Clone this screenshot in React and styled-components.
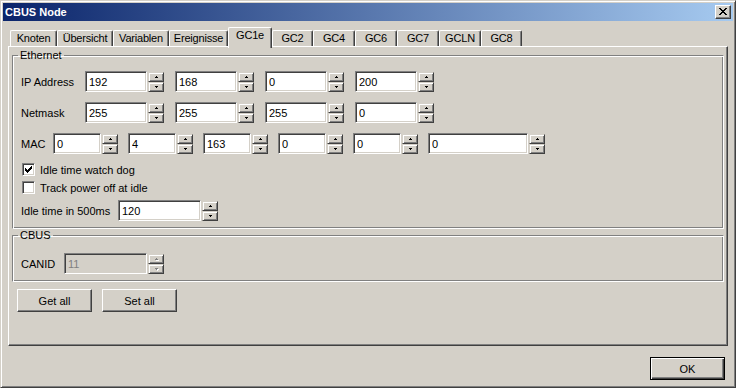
import React from "react";
import styled, { createGlobalStyle } from "styled-components";

const TABS = [
  { label: "Knoten", w: 47 },
  { label: "Übersicht", w: 56 },
  { label: "Variablen", w: 56 },
  { label: "Ereignisse", w: 59 },
  { label: "GC1e", w: 44, active: true },
  { label: "GC2", w: 41 },
  { label: "GC4", w: 42 },
  { label: "GC6", w: 42 },
  { label: "GC7", w: 42 },
  { label: "GCLN", w: 42 },
  { label: "GC8", w: 41 },
];

const UP = "M1 0h1v1h-1z M0 1h3v1h-3z";
const DOWN = "M0 0h3v1h-3z M1 1h1v1h-1z";

const Arrow = ({ down, disabled }) => (
  <svg width="3" height="2" viewBox="0 0 3 2" shapeRendering="crispEdges" style={{ display: "block", overflow: "visible" }}>
    {disabled && <path transform="translate(1 1)" fill="#fff" d={down ? DOWN : UP} />}
    <path fill={disabled ? "#808080" : "#000"} d={down ? DOWN : UP} />
  </svg>
);

const Spin = ({ disabled }) => (
  <SpinCol>
    <SpinBtn>
      <Arrow disabled={disabled} />
    </SpinBtn>
    <SpinBtn>
      <Arrow down disabled={disabled} />
    </SpinBtn>
  </SpinCol>
);

const Field = ({ value, w, mr, disabled }) => (
  <FieldWrap $mr={mr}>
    <Edit $w={w} value={value} readOnly disabled={disabled} />
    <Spin disabled={disabled} />
  </FieldWrap>
);

const Check = ({ checked, label, mt }) => (
  <CheckRow $mt={mt}>
    <CheckBox>
      {checked && (
        <svg width="7" height="7" viewBox="0 0 7 7" shapeRendering="crispEdges">
          <path d="M6 0h1v1h-1z M5 1h2v1h-2z M0 2h1v1h-1z M4 2h3v1h-3z M0 3h2v1h-2z M3 3h3v1h-3z M0 4h5v1h-5z M1 5h3v1h-3z M2 6h1v1h-1z" />
        </svg>
      )}
    </CheckBox>
    {label}
  </CheckRow>
);

const App = () => {
  return (
    <>
      <GlobalStyle />
      <Window>
        <TitleBar>
          <Title>CBUS Node</Title>
          <CloseBtn>
            <svg width="8" height="7" viewBox="0 0 8 7" shapeRendering="crispEdges">
              <path d="M0 0h2v1h-2z M6 0h2v1h-2z M1 1h2v1h-2z M5 1h2v1h-2z M2 2h4v1h-4z M3 3h2v1h-2z M2 4h4v1h-4z M1 5h2v1h-2z M5 5h2v1h-2z M0 6h2v1h-2z M6 6h2v1h-2z" />
            </svg>
          </CloseBtn>
        </TitleBar>

        <Body>
          <TabStrip>
            {TABS.map((t) => (
              <Tab key={t.label} $w={t.w} $active={t.active}>
                {t.label}
              </Tab>
            ))}
          </TabStrip>

          <Panel>
            <GroupBox>
              <Legend>Ethernet</Legend>
              <Row $mt={9}>
                <Label $w={64}>IP Address</Label>
                <Field value="192" w={62} mr={11} />
                <Field value="168" w={62} mr={11} />
                <Field value="0" w={62} mr={11} />
                <Field value="200" w={62} />
              </Row>
              <Row $mt={10}>
                <Label $w={64}>Netmask</Label>
                <Field value="255" w={62} mr={11} />
                <Field value="255" w={62} mr={11} />
                <Field value="255" w={62} mr={11} />
                <Field value="0" w={62} />
              </Row>
              <Row $mt={10}>
                <Label $w={32}>MAC</Label>
                <Field value="0" w={48} mr={10} />
                <Field value="4" w={48} mr={10} />
                <Field value="163" w={48} mr={10} />
                <Field value="0" w={48} mr={10} />
                <Field value="0" w={48} mr={10} />
                <Field value="0" w={100} />
              </Row>
              <Check checked label="Idle time watch dog" mt={9} />
              <Check label="Track power off at idle" mt={5} />
              <Row $mt={6}>
                <Label $w={97}>Idle time in 500ms</Label>
                <Field value="120" w={83} />
              </Row>
            </GroupBox>

            <GroupBox>
              <Legend>CBUS</Legend>
              <Row $mt={11}>
                <Label $w={43}>CANID</Label>
                <Field value="11" w={83} disabled />
              </Row>
            </GroupBox>

            <ButtonRow>
              <Button>Get all</Button>
              <Button>Set all</Button>
            </ButtonRow>
          </Panel>

          <Footer>
            <Button $default>OK</Button>
          </Footer>
        </Body>
      </Window>
    </>
  );
};

export default App;

const GlobalStyle = createGlobalStyle`
  html, body {
    margin: 0;
    padding: 0;
    background: #d4d0c8;
  }
`;

const Window = styled.div`
  width: 736px;
  height: 388px;
  box-sizing: border-box;
  padding: 2px;
  background: #d4d0c8;
  border: 1px solid;
  border-color: #d4d0c8 #404040 #404040 #d4d0c8;
  box-shadow: inset 1px 1px #fff, inset -1px -1px #808080;
  display: flex;
  flex-direction: column;
  font-family: "Liberation Sans", Arial, sans-serif;
  font-size: 11px;
  color: #000;
`;

const TitleBar = styled.div`
  height: 18px;
  flex: none;
  display: flex;
  align-items: center;
  justify-content: space-between;
  padding: 0 2px;
  background: linear-gradient(to right, #0a246a, #a6caf0);
`;

const Title = styled.span`
  color: #fff;
  font-weight: bold;
  font-size: 11px;
  line-height: 13px;
`;

const CloseBtn = styled.div`
  width: 16px;
  height: 14px;
  box-sizing: border-box;
  background: #d4d0c8;
  border: 1px solid;
  border-color: #fff #404040 #404040 #fff;
  box-shadow: inset -1px -1px #808080;
  display: flex;
  align-items: center;
  justify-content: center;
  padding: 0 1px 1px 0;
  svg {
    display: block;
  }
`;

const Body = styled.div`
  flex: 1;
  display: flex;
  flex-direction: column;
  padding: 6px 5px 0;
`;

const TabStrip = styled.div`
  display: flex;
  align-items: flex-end;
  height: 19px;
  padding-left: 2px;
  position: relative;
  z-index: 1;
`;

const Tab = styled.div`
  width: ${(p) => p.$w}px;
  height: ${(p) => (p.$active ? 21 : 16)}px;
  margin-bottom: ${(p) => (p.$active ? -2 : 0)}px;
  box-sizing: border-box;
  background: #d4d0c8;
  border-top: 1px solid #fff;
  border-left: 1px solid #fff;
  border-right: 1px solid #404040;
  border-radius: 2px 2px 0 0;
  box-shadow: inset -1px 0 #808080;
  text-align: center;
  line-height: 15px;
  letter-spacing: -0.2px;
  white-space: nowrap;
`;

const Panel = styled.div`
  width: 720px;
  height: 300px;
  box-sizing: border-box;
  border: 1px solid;
  border-color: #fff #404040 #404040 #fff;
  box-shadow: inset -1px -1px #808080;
  padding: 2px 3px 0;
  display: flex;
  flex-direction: column;
`;

const GroupBox = styled.fieldset`
  margin: 0;
  min-width: 0;
  padding: 0 8px 7px;
  border: 1px solid;
  border-color: #808080 #fff #fff #808080;
  box-shadow: inset 1px 1px #fff, inset -1px -1px #808080;
  display: flex;
  flex-direction: column;
`;

const Legend = styled.legend`
  padding: 0 2px;
  margin-left: -3px;
  line-height: 13px;
  font-size: 11px;
`;

const Row = styled.div`
  display: flex;
  align-items: center;
  height: 21px;
  margin-top: ${(p) => p.$mt || 0}px;
`;

const Label = styled.span`
  width: ${(p) => p.$w}px;
  flex: none;
  white-space: nowrap;
`;

const FieldWrap = styled.div`
  display: flex;
  align-items: flex-end;
  gap: 1px;
  height: 21px;
  margin-right: ${(p) => p.$mr || 0}px;
`;

const Edit = styled.input`
  width: ${(p) => p.$w}px;
  height: 21px;
  box-sizing: border-box;
  margin: 0;
  padding: 0 0 0 3px;
  border: 1px solid;
  border-color: #808080 #fff #fff #808080;
  box-shadow: inset 1px 1px #404040, inset -1px -1px #d4d0c8;
  background: #fff;
  font-family: "Liberation Sans", Arial, sans-serif;
  font-size: 11px;
  color: #000;
  outline: none;

  &:disabled {
    background: #d4d0c8;
    color: #808080;
  }
`;

const SpinCol = styled.div`
  display: flex;
  flex-direction: column;
  width: 16px;
  height: 20px;
`;

const SpinBtn = styled.div`
  height: 10px;
  box-sizing: border-box;
  background: #d4d0c8;
  border: 1px solid;
  border-color: #d4d0c8 #404040 #404040 #d4d0c8;
  box-shadow: inset 1px 1px #fff, inset -1px -1px #808080;
  display: flex;
  align-items: center;
  justify-content: center;
`;

const CheckRow = styled.label`
  display: flex;
  align-items: center;
  height: 13px;
  margin-top: ${(p) => p.$mt || 0}px;
  margin-left: 1px;
  gap: 5px;
  white-space: nowrap;
`;

const CheckBox = styled.span`
  width: 13px;
  height: 13px;
  box-sizing: border-box;
  flex: none;
  background: #fff;
  border: 1px solid;
  border-color: #808080 #fff #fff #808080;
  box-shadow: inset 1px 1px #404040, inset -1px -1px #d4d0c8;
  display: flex;
  align-items: center;
  justify-content: center;
  svg {
    display: block;
  }
`;

const ButtonRow = styled.div`
  display: flex;
  gap: 10px;
  margin: 7px 0 0 5px;
`;

const Button = styled.div`
  width: 75px;
  height: 23px;
  box-sizing: border-box;
  background: #d4d0c8;
  border: 1px solid;
  border-color: ${(p) => (p.$default ? "#000" : "#fff #404040 #404040 #fff")};
  box-shadow: ${(p) =>
    p.$default
      ? "inset 1px 1px #fff, inset -1px -1px #404040, inset -2px -2px #808080"
      : "inset -1px -1px #808080"};
  display: flex;
  align-items: center;
  justify-content: center;
`;

const Footer = styled.div`
  display: flex;
  justify-content: flex-end;
  padding-right: 3px;
  margin-top: 11px;
`;
